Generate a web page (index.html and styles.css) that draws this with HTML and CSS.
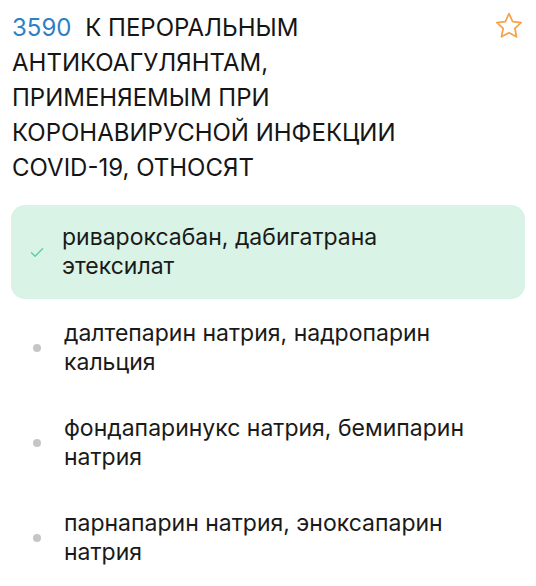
FILE: index.html
```html
<!DOCTYPE html>
<html lang="ru">
<head>
    <meta charset="UTF-8">
    <meta name="viewport" content="width=device-width, initial-scale=1.0">
    <title>Вопрос 3590</title>
    <link rel="stylesheet" href="styles.css">
</head>
<body>
    <div class="question">
        <div class="question-head">
            <h2 class="question-title"><span class="question-num">3590</span> К ПЕРОРАЛЬНЫМ АНТИКОАГУЛЯНТАМ, ПРИМЕНЯЕМЫМ ПРИ КОРОНАВИРУСНОЙ ИНФЕКЦИИ COVID-19, ОТНОСЯТ</h2>
            <button class="fav" type="button" aria-label="В избранное">
                <svg width="32" height="32" viewBox="0 0 24 24" fill="none" stroke="#f6a24c" stroke-width="1.3" stroke-linejoin="round">
                    <path d="M12 2.8l2.75 5.9 6.35.75-4.7 4.4 1.25 6.3L12 17l-5.65 3.15 1.25-6.3-4.7-4.4 6.35-.75z"/>
                </svg>
            </button>
        </div>
        <ul class="answers">
            <li class="answer correct">
                <span class="mark">
                    <svg width="14" height="11" viewBox="0 0 14 11" fill="none" stroke="#5fcf9b" stroke-width="1.4" stroke-linecap="round" stroke-linejoin="round">
                        <path d="M1.5 5.8l3.6 3.4L12.5 1.8"/>
                    </svg>
                </span>
                <span class="answer-text">ривароксабан, дабигатрана этексилат</span>
            </li>
            <li class="answer">
                <span class="mark"><span class="dot"></span></span>
                <span class="answer-text">далтепарин натрия, надропарин кальция</span>
            </li>
            <li class="answer">
                <span class="mark"><span class="dot"></span></span>
                <span class="answer-text">фондапаринукс натрия, бемипарин натрия</span>
            </li>
            <li class="answer">
                <span class="mark"><span class="dot"></span></span>
                <span class="answer-text">парнапарин натрия, эноксапарин натрия</span>
            </li>
        </ul>
    </div>
</body>
</html>
```

FILE: styles.css
```css
body {
    margin: 0;
    background: #fff;
    font-family: Inter, "Noto Sans", sans-serif;
    color: #151515;
}
.question {
    padding: 10px 0 0 0;
}
.question-head {
    display: flex;
    align-items: flex-start;
    padding: 0 11px 0 12px;
}
.question-title {
    flex: 1;
    margin: 0;
    font-size: 24px;
    font-weight: 400;
    line-height: 35px;
    color: #151515;
    padding-right: 76px;
}
.question-num {
    color: #2f7fc4;
    margin-right: 7px;
}
.fav {
    border: none;
    background: none;
    padding: 0;
    margin-top: 0;
    cursor: pointer;
}
.answers {
    list-style: none;
    margin: 20px 11px 0 11px;
    padding: 0;
}
.answer {
    display: flex;
    align-items: center;
    min-height: 95px;
    border-radius: 14px;
}
.answer.correct {
    background: #d9f3e6;
    min-height: 94px;
    margin-bottom: 1px;
}
.mark {
    width: 53px;
    flex: none;
    display: flex;
    justify-content: center;
}
.correct .mark {
    width: 51px;
}
.dot {
    width: 8px;
    height: 8px;
    border-radius: 50%;
    background: #c6c6c6;
    margin-right: 2px;
}
.answer-text {
    font-size: 23px;
    line-height: 29px;
    padding-right: 40px;
    color: #1a1a1a;
}
```
